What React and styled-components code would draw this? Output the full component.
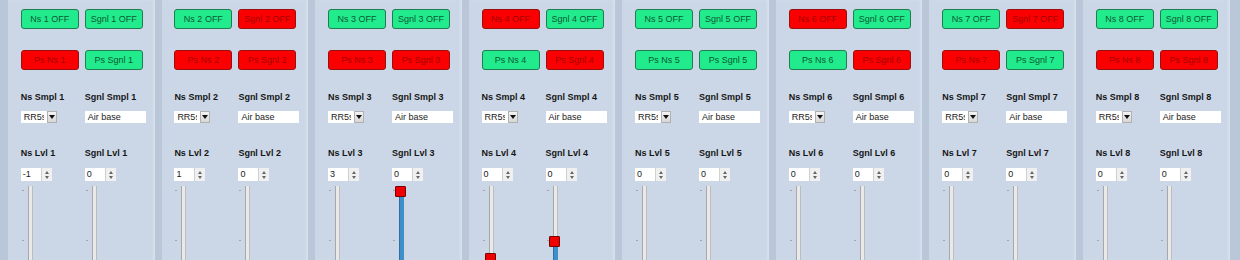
import React from 'react';
import styled, { createGlobalStyle } from 'styled-components';

const channels = [
    { n: 1, nsOff: true, sgOff: true, psNs: false, psSg: true, ns: '-1', sg: '0', nsPos: null, sgPos: null },
    { n: 2, nsOff: true, sgOff: false, psNs: false, psSg: false, ns: '1', sg: '0', nsPos: null, sgPos: null },
    { n: 3, nsOff: true, sgOff: true, psNs: false, psSg: false, ns: '3', sg: '0', nsPos: null, sgPos: 0 },
    { n: 4, nsOff: false, sgOff: true, psNs: true, psSg: false, ns: '0', sg: '0', nsPos: 67, sgPos: 50 },
    { n: 5, nsOff: true, sgOff: true, psNs: true, psSg: true, ns: '0', sg: '0', nsPos: null, sgPos: null },
    { n: 6, nsOff: false, sgOff: true, psNs: true, psSg: false, ns: '0', sg: '0', nsPos: null, sgPos: null },
    { n: 7, nsOff: true, sgOff: false, psNs: false, psSg: true, ns: '0', sg: '0', nsPos: null, sgPos: null },
    { n: 8, nsOff: true, sgOff: true, psNs: false, psSg: false, ns: '0', sg: '0', nsPos: null, sgPos: null },
];

const Global = createGlobalStyle`
    html, body {
        margin: 0;
        padding: 0;
        height: 260px;
        overflow: hidden;
        background: #bac7d9;
        font-family: "Liberation Sans", Arial, sans-serif;
    }
`;

const Mixer = styled.div`
    display: flex;
    gap: 7px;
    padding: 0 10.4px 0 8px;
    height: 260px;
    overflow: hidden;
`;

const Channel = styled.section`
    flex: 1;
    background: #cbd7e7;
    padding: 9px 0 0 12.8px;
    box-shadow: inset -2px 0 2px rgba(255, 255, 255, 0.25);
`;

const Pair = styled.div`
    display: grid;
    grid-template-columns: 58px 58px;
    column-gap: 6px;
    margin-top: ${p => p.$top || 0}px;
`;

const Toggle = styled.button`
    height: 20px;
    padding: 0;
    border-radius: 3px;
    font-family: inherit;
    font-size: 9px;
    border: 1px solid ${p => p.$on ? '#1f7d4f' : '#9c0f0f'};
    background: ${p => p.$on ? '#22eb8d' : '#fb0000'};
    color: ${p => p.$on ? '#0b5a31' : '#a40000'};
`;

const Label = styled.div`
    font-size: 9px;
    font-weight: bold;
    line-height: 12px;
    color: #161616;
    white-space: nowrap;
`;

const Select = styled.div`
    display: flex;
    width: 36px;
    height: 12px;
    background: #fff;
    box-sizing: border-box;
`;

const SelectText = styled.span`
    width: 20px;
    padding-left: 3px;
    overflow: hidden;
    font-size: 9px;
    line-height: 12px;
    color: #222;
    white-space: nowrap;
`;

const SelectArrow = styled.span`
    margin-left: auto;
    width: 10px;
    display: flex;
    align-items: center;
    justify-content: center;
    background: linear-gradient(#f4f4f4, #d6d6d6);
    border: 1px solid #b0b0b0;
    box-sizing: border-box;

    &::after {
        content: '';
        border-left: 3px solid transparent;
        border-right: 3px solid transparent;
        border-top: 4px solid #111;
    }
`;

const TextInput = styled.div`
    width: 61px;
    height: 12px;
    background: #fff;
    padding-left: 3px;
    box-sizing: border-box;
    font-size: 9px;
    line-height: 12px;
    color: #222;
`;

const Spin = styled.div`
    display: flex;
    width: 31px;
    height: 13px;
    background: #fff;
`;

const SpinValue = styled.span`
    flex: 1;
    padding-left: 2px;
    font-size: 9px;
    line-height: 13px;
    color: #222;
`;

const SpinArrows = styled.span`
    width: 10px;
    display: flex;
    flex-direction: column;
    align-items: center;
    justify-content: center;
    gap: 2px;
    background: #f0f0f0;
    border-left: 1px solid #d0d0d0;

    &::before, &::after {
        content: '';
        border-left: 2.5px solid transparent;
        border-right: 2.5px solid transparent;
    }
    &::before { border-bottom: 3px solid #666; }
    &::after { border-top: 3px solid #666; }
`;

const Slider = styled.div`
    position: relative;
    width: 18px;
    height: 74px;
    margin-top: 5px;
`;

const Track = styled.div`
    position: absolute;
    left: 7px;
    top: 0;
    bottom: 0;
    width: 3px;
    background: #e9e9e9;
    border-left: 1px solid #a8a8a8;
    border-right: 1px solid #bdbdbd;
`;

const Tick = styled.div`
    position: absolute;
    left: 1px;
    width: 2px;
    height: 1px;
    background: #a6a6a6;
`;

const Fill = styled.div`
    position: absolute;
    left: 7px;
    bottom: 0;
    width: 4px;
    background: #3f8fcb;
    border-left: 1px solid #2f6f9f;
`;

const Handle = styled.div`
    position: absolute;
    left: 3px;
    width: 9px;
    height: 9px;
    background: #ee0000;
    border: 1px solid #7a0000;
    border-radius: 1px;
`;

const Level = ({ pos }) => (
    <Slider>
        <Track />
        {[4, 54].map(t => <Tick key={t} style={{ top: t }} />)}
        {pos !== null && <Fill style={{ top: pos + 10 }} />}
        {pos !== null && <Handle style={{ top: pos }} />}
    </Slider>
);

const App = () => (
    <>
        <Global />
        <Mixer>
            {channels.map(c => (
                <Channel key={c.n}>
                    <Pair>
                        <Toggle $on={c.nsOff}>Ns {c.n} OFF</Toggle>
                        <Toggle $on={c.sgOff}>Sgnl {c.n} OFF</Toggle>
                    </Pair>
                    <Pair $top={21}>
                        <Toggle $on={c.psNs}>Ps Ns {c.n}</Toggle>
                        <Toggle $on={c.psSg}>Ps Sgnl {c.n}</Toggle>
                    </Pair>
                    <Pair $top={21}>
                        <Label>Ns Smpl {c.n}</Label>
                        <Label>Sgnl Smpl {c.n}</Label>
                    </Pair>
                    <Pair $top={8}>
                        <Select>
                            <SelectText>RR5s</SelectText>
                            <SelectArrow />
                        </Select>
                        <TextInput>Air base</TextInput>
                    </Pair>
                    <Pair $top={24}>
                        <Label>Ns Lvl {c.n}</Label>
                        <Label>Sgnl Lvl {c.n}</Label>
                    </Pair>
                    <Pair $top={9}>
                        <Spin>
                            <SpinValue>{c.ns}</SpinValue>
                            <SpinArrows />
                        </Spin>
                        <Spin>
                            <SpinValue>{c.sg}</SpinValue>
                            <SpinArrows />
                        </Spin>
                    </Pair>
                    <Pair>
                        <Level pos={c.nsPos} />
                        <Level pos={c.sgPos} />
                    </Pair>
                </Channel>
            ))}
        </Mixer>
    </>
);

export default App;
